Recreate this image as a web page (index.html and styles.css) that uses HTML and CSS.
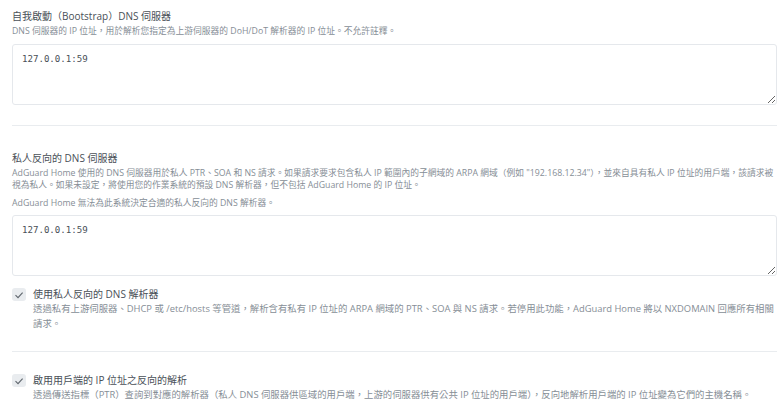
FILE: index.html
```html
<!DOCTYPE html>
<html lang="zh-Hant">
<head>
  <meta charset="UTF-8">
  <title>DNS 設定</title>
  <link rel="stylesheet" href="styles.css">
</head>
<body>

  <div class="settings">
    <div class="field">
      <div class="field-title">自我啟動（Bootstrap）DNS 伺服器</div>
      <div class="field-desc">DNS 伺服器的 IP 位址，用於解析您指定為上游伺服器的 DoH/DoT 解析器的 IP 位址。不允許註釋。</div>
      <textarea class="field-input">127.0.0.1:59</textarea>
    </div>

    <hr class="divider">

    <div class="field field-private">
      <div class="field-title">私人反向的 DNS 伺服器</div>
      <div class="field-desc">AdGuard Home 使用的 DNS 伺服器用於私人 PTR、SOA 和 NS 請求。如果請求要求包含私人 IP 範圍內的子網域的 ARPA 網域（例如 "192.168.12.34"），並來自具有私人 IP 位址的用戶端，該請求被視為私人。如果未設定，將使用您的作業系統的預設 DNS 解析器，但不包括 AdGuard Home 的 IP 位址。</div>
      <div class="field-desc field-note">AdGuard Home 無法為此系統決定合適的私人反向的 DNS 解析器。</div>
      <textarea class="field-input">127.0.0.1:59</textarea>
    </div>

    <label class="check">
      <span class="check-box">
        <svg width="10" height="10" viewBox="0 0 10 10"><polyline points="1.5,5.2 4,7.6 8.6,2.6" /></svg>
      </span>
      <span class="check-text">
        <span class="check-title">使用私人反向的 DNS 解析器</span>
        <span class="check-desc">透過私有上游伺服器、DHCP 或 /etc/hosts 等管道，解析含有私有 IP 位址的 ARPA 網域的 PTR、SOA 與 NS 請求。若停用此功能，AdGuard Home 將以 NXDOMAIN 回應所有相關請求。</span>
      </span>
    </label>

    <hr class="divider divider-check">

    <label class="check">
      <span class="check-box">
        <svg width="10" height="10" viewBox="0 0 10 10"><polyline points="1.5,5.2 4,7.6 8.6,2.6" /></svg>
      </span>
      <span class="check-text">
        <span class="check-title">啟用用戶端的 IP 位址之反向的解析</span>
        <span class="check-desc">透過傳送指標（PTR）查詢到對應的解析器（私人 DNS 伺服器供區域的用戶端，上游的伺服器供有公共 IP 位址的用戶端），反向地解析用戶端的 IP 位址變為它們的主機名稱。</span>
      </span>
    </label>
  </div>

</body>
</html>
```

FILE: styles.css
```css
body {
  margin: 0;
  background-color: #fff;
  font-family: "Open Sans", "Noto Sans CJK TC", sans-serif;
  color: #495057;
}

.settings {
  width: 765px;
  margin-left: 12px;
  padding-top: 9px;
}

.field-title {
  font-size: 10px;
  line-height: 15px;
  color: #495057;
}

.field-desc {
  font-size: 8.75px;
  line-height: 12.5px;
  color: #868e96;
  margin-top: 1px;
}

.field-note {
  margin-top: 5px;
}

.field-input {
  display: block;
  box-sizing: border-box;
  width: 100%;
  height: 61px;
  margin-top: 6px;
  padding: 7px 9px;
  border: 1px solid #e5e8ec;
  border-radius: 3px;
  font-family: "DejaVu Sans Mono", monospace;
  font-size: 9.1px;
  line-height: 14px;
  color: #495057;
  resize: vertical;
}

.divider {
  border: none;
  border-top: 1px solid #e9ecef;
  margin: 20px 0 25px;
}

.divider-check {
  margin: 20px 0 21px;
}

.check {
  display: flex;
  gap: 7px;
  margin-top: 11px;
}

.check-box {
  flex: none;
  display: flex;
  align-items: center;
  justify-content: center;
  width: 14px;
  height: 13px;
  margin-top: 1px;
  border-radius: 3px;
  background-color: #e9ecef;
}

.check-box polyline {
  fill: none;
  stroke: #5f666d;
  stroke-width: 1.1;
}

.check-text {
  display: flex;
  flex-direction: column;
}

.check-title {
  font-size: 10px;
  line-height: 14px;
  color: #495057;
}

.check-desc {
  font-size: 9.4px;
  line-height: 15px;
  color: #868e96;
}
```
